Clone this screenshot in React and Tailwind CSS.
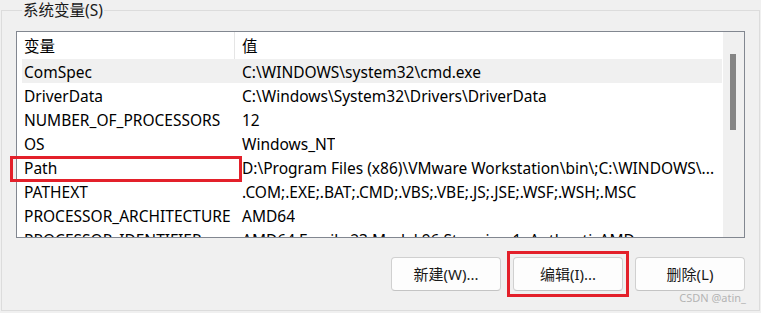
import React from 'react';

const rows = [
    { name: 'ComSpec', value: 'C:\\WINDOWS\\system32\\cmd.exe', selected: true },
    { name: 'DriverData', value: 'C:\\Windows\\System32\\Drivers\\DriverData' },
    { name: 'NUMBER_OF_PROCESSORS', value: '12' },
    { name: 'OS', value: 'Windows_NT' },
    { name: 'Path', value: 'D:\\Program Files (x86)\\VMware Workstation\\bin\\;C:\\WINDOWS\\...' },
    { name: 'PATHEXT', value: '.COM;.EXE;.BAT;.CMD;.VBS;.VBE;.JS;.JSE;.WSF;.WSH;.MSC' },
    { name: 'PROCESSOR_ARCHITECTURE', value: 'AMD64' },
    { name: 'PROCESSOR_IDENTIFIER', value: 'AMD64 Family 23 Model 96 Stepping 1, AuthenticAMD' },
];

const font = { fontFamily: '"Noto Sans", "Noto Sans CJK SC", sans-serif' };

function Button({ children }) {
    return (
        <button className="h-[34px] w-[110px] rounded-[4px] border border-[#d0d0d0] border-b-[#c4c4c4] bg-[#fdfdfd] pt-[1px] text-[15px] text-[#1a1a1a]">
            {children}
        </button>
    );
}

export default function App() {
    return (
        <div className="relative h-[313px] w-[761px] overflow-hidden bg-[#f0f0f0] pl-[1px] text-black" style={font}>
            <fieldset className="relative h-[311px] w-[757px] border border-[#dcdcdc] px-[14px]">
                <legend className="ml-[6px] px-[1px] text-[15.5px] leading-[20px] text-[#1a1a1a]">系统变量(S)</legend>

                {/* list */}
                <div className="mt-[11px] flex h-[207px] w-[729px] border border-[#828790] bg-white">
                    <div className="flex-1 overflow-hidden">
                        <div className="flex h-[27px] items-center text-[15.5px]">
                            <div className="w-[217px] pl-[7px] pt-[3px]">变量</div>
                            <div className="h-full w-px bg-[#e5e5e5]" />
                            <div className="pl-[7px] pt-[3px]">值</div>
                        </div>
                        <div className="pl-[5px]">
                            {rows.map((r) => (
                                <div
                                    key={r.name}
                                    className={`flex h-[24px] items-center whitespace-nowrap pt-[3px] text-[15.5px] ${r.selected ? 'bg-[#f0f0f0]' : ''}`}
                                >
                                    <div className="w-[218px] shrink-0 pl-[2px]">{r.name}</div>
                                    <div className="overflow-hidden pl-[2px]">{r.value}</div>
                                </div>
                            ))}
                        </div>
                    </div>
                    {/* scrollbar */}
                    <div className="w-[22px] border-l border-white bg-[#f0f0f0] pt-[22px] pl-[7px]">
                        <div className="h-[76px] w-[6px] bg-[#858585]" />
                    </div>
                </div>

                {/* buttons */}
                <div className="mt-[19px] flex justify-end gap-[12px]">
                    <Button>新建(W)...</Button>
                    <div className="relative">
                        <Button>编辑(I)...</Button>
                        <div className="pointer-events-none absolute -left-[6px] -right-[6px] -top-[6px] -bottom-[6px] border-[3px] border-[#e3202a]" />
                    </div>
                    <Button>删除(L)</Button>
                </div>

                {/* annotation around Path */}
                <div className="pointer-events-none absolute left-[8px] top-[136px] h-[26px] w-[232px] border-[3px] border-[#e3202a]" />
            </fieldset>
            <div className="absolute right-[15px] top-[292px] text-[11px] leading-[12px] text-[#b4b4b4]">CSDN @atin_</div>
        </div>
    );
}
